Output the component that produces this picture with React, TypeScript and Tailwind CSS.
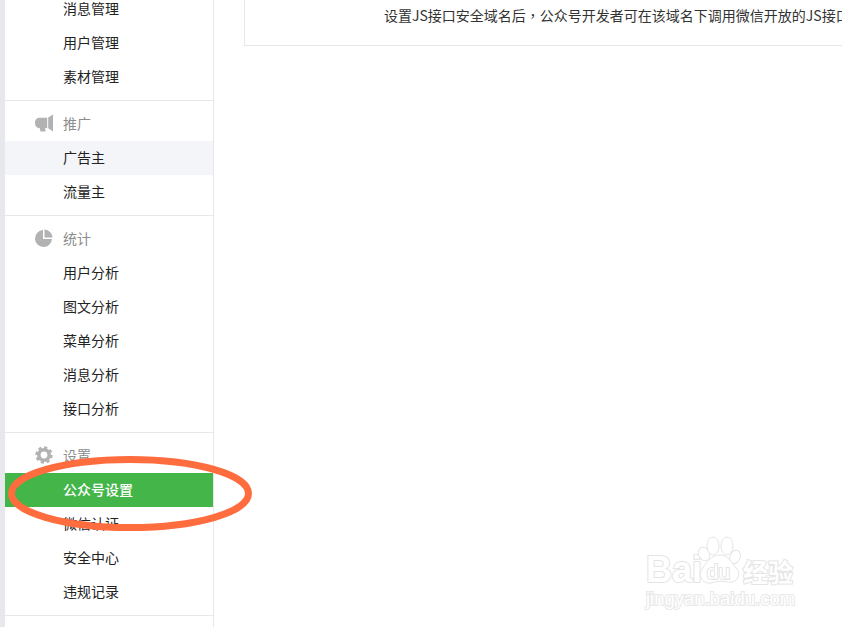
const sections = [
  { items: ["消息管理", "用户管理", "素材管理"] },
  { title: "推广", icon: "speaker", items: ["广告主", "流量主"] },
  { title: "统计", icon: "pie", items: ["用户分析", "图文分析", "菜单分析", "消息分析", "接口分析"] },
  { title: "设置", icon: "gear", items: ["公众号设置", "微信认证", "安全中心", "违规记录"] },
];

function NavIcon({ name }: { name: string }) {
  if (name === "speaker") {
    return (
      <svg width="18" height="18" viewBox="0 0 18 18" fill="#b2b2b2">
        <path d="M0 9C0 6 1.8 3.8 4 3.8H12.2V14H10L10.6 17.5H5.6L4.6 14C2 14 0 12 0 9Z" />
        <path d="M13.2 3.5L18 0.5V17.5L13.2 14.2Z" />
      </svg>
    );
  }
  if (name === "pie") {
    return (
      <svg width="18" height="18" viewBox="0 0 18 18" fill="#b2b2b2">
        <path d="M8 1V10H17A8.5 8.5 0 1 1 8 1Z" />
        <path d="M9.5 0.5A8.5 8.5 0 0 1 17.5 8.5H9.5Z" />
      </svg>
    );
  }
  return (
    <svg width="18" height="18" viewBox="0 0 18 18" fill="none" stroke="#b2b2b2">
      <circle cx="9" cy="9" r="5.2" strokeWidth="3.6" />
      <circle cx="9" cy="9" r="7.4" strokeWidth="2.6" strokeDasharray="3.1 2.7" />
    </svg>
  );
}

function Section({ title, icon, items }: { title?: string; icon?: string; items: string[] }) {
  return (
    <div className="border-b border-[#e7e7eb] py-[6px]">
      {title && (
        <div className="flex h-[34px] items-center pb-[2px] text-[#8d8d8d]">
          <span className="ml-[30px] flex w-[28px] items-center">
            <NavIcon name={icon ?? ""} />
          </span>
          {title}
        </div>
      )}
      {items.map((item) => (
        <div
          key={item}
          className={
            "flex h-[34px] items-center pb-[2px] pl-[58px] " +
            (item === "公众号设置"
              ? "bg-[#44b549] font-medium text-white"
              : item === "广告主"
                ? "bg-[#f4f5f9] text-[#222222]"
                : "text-[#222222]")
          }
        >
          {item}
        </div>
      ))}
    </div>
  );
}

function Watermark() {
  return (
    <div className="absolute left-[646px] top-[536px] flex w-[152px] flex-col text-white">
      <div className="flex items-end">
        <span className="text-[36px] leading-[30px] font-bold [-webkit-text-stroke:2px_#e4e4e4] [paint-order:stroke_fill] [font-family:'Liberation_Sans',sans-serif]">
          Bai
        </span>
        <div className="relative -ml-[5px] h-[49px] w-[46px] shrink-0">
          <svg width="46" height="49" viewBox="0 0 46 49" fill="#ffffff" stroke="#e4e4e4">
            <ellipse cx="7" cy="18" rx="5.5" ry="7" transform="rotate(-25 7 18)" />
            <ellipse cx="16" cy="10" rx="6" ry="9" />
            <ellipse cx="30" cy="10" rx="6" ry="9" />
            <ellipse cx="38" cy="21" rx="5" ry="7" transform="rotate(25 38 21)" />
            <path d="M23 19C31 19 35 27 40 33C45 40 38 48 31 46C26 45 20 45 14 47C7 48 1 42 4 35C8 28 14 19 23 19Z" />
          </svg>
          <div className="absolute inset-x-0 bottom-[1px] flex justify-center pr-[3px] text-[21px] leading-[24px] [-webkit-text-stroke:2px_#e4e4e4] [paint-order:stroke_fill] [font-family:'Liberation_Sans',sans-serif]">
            du
          </div>
        </div>
        <span className="text-[25px] leading-[28px] font-bold whitespace-nowrap [-webkit-text-stroke:2px_#e4e4e4] [paint-order:stroke_fill]">
          经验
        </span>
      </div>
      <span className="mt-[3px] text-[18.5px] leading-[22px] whitespace-nowrap [-webkit-text-stroke:2px_#e8e8e8] [paint-order:stroke_fill] [font-family:'Liberation_Sans',sans-serif]">
        jingyan.baidu.com
      </span>
    </div>
  );
}

export default function App() {
  return (
    <div className="relative flex h-[627px] w-[842px] overflow-hidden bg-white text-[14px] [font-family:'Noto_Sans_CJK_SC','Liberation_Sans',sans-serif]">
      <div className="w-[5px] shrink-0 bg-[#e7e8ed]" />
      <div className="-mt-[14px] w-[209px] shrink-0 self-start border-r border-[#e7e7eb]">
        {sections.map((section, i) => (
          <Section key={i} {...section} />
        ))}
        <div className="h-[40px]" />
      </div>
      <div className="ml-[30px] -mt-[20px] h-[66px] min-w-0 flex-1">
        <div className="h-full w-[700px] border-b border-l border-[#e7e7eb] pl-[139px] pt-[23px] leading-[24px] whitespace-nowrap text-[#333333]">
          设置JS接口安全域名后
          <span className="[font-family:'Noto_Sans_CJK_TC',sans-serif]">，</span>
          公众号开发者可在该域名下调用微信开放的JS接口
        </div>
      </div>
      <svg className="absolute left-0 top-[450px]" width="260" height="90" viewBox="0 0 260 90" fill="none">
        <ellipse cx="130" cy="43.5" rx="118.5" ry="34" stroke="#ff6c3e" strokeWidth="7" />
      </svg>
      <Watermark />
    </div>
  );
}
